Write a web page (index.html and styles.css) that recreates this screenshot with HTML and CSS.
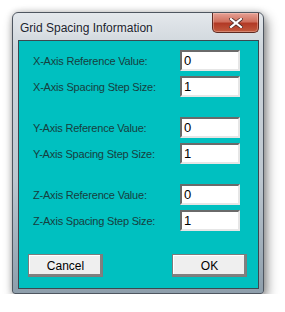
FILE: index.html
```html
<!DOCTYPE html>
<html lang="en">
<head>
    <meta charset="UTF-8">
    <title>Grid Spacing Information</title>
    <link rel="stylesheet" href="styles.css">
</head>
<body>
    <div class="window">
        <div class="titlebar">
            <span class="title">Grid Spacing Information</span>
            <button class="close" aria-label="Close">
                <svg width="14" height="10" viewBox="0 0 14 10">
                    <path d="M2 1 L12 9 M12 1 L2 9" stroke="#4a2a26" stroke-width="3.6" stroke-linecap="square"/>
                    <path d="M2 1 L12 9 M12 1 L2 9" stroke="#ffffff" stroke-width="2.2" stroke-linecap="square"/>
                </svg>
            </button>
        </div>

        <div class="client">
            <div class="group">
                <div class="row">
                    <label for="x-ref">X-Axis Reference Value:</label>
                    <input type="text" id="x-ref" value="0">
                </div>
                <div class="row">
                    <label for="x-step">X-Axis Spacing Step Size:</label>
                    <input type="text" id="x-step" value="1">
                </div>
            </div>

            <div class="group">
                <div class="row">
                    <label for="y-ref">Y-Axis Reference Value:</label>
                    <input type="text" id="y-ref" value="0">
                </div>
                <div class="row">
                    <label for="y-step">Y-Axis Spacing Step Size:</label>
                    <input type="text" id="y-step" value="1">
                </div>
            </div>

            <div class="group">
                <div class="row">
                    <label for="z-ref">Z-Axis Reference Value:</label>
                    <input type="text" id="z-ref" value="0">
                </div>
                <div class="row">
                    <label for="z-step">Z-Axis Spacing Step Size:</label>
                    <input type="text" id="z-step" value="1">
                </div>
            </div>

            <div class="buttons">
                <button class="btn">Cancel</button>
                <button class="btn">OK</button>
            </div>
        </div>
    </div>
</body>
</html>
```

FILE: styles.css
```css
body {
    margin: 0;
    background: #ffffff;
    font-family: 'Liberation Sans', Arial, sans-serif;
}

.window {
    margin: 12px 0 0 12px;
    width: 241px;
    height: 276px;
    padding: 0 4px 4px 5px;
    border: 1px solid #4e5660;
    border-radius: 6px 6px 3px 3px;
    background: linear-gradient(to bottom, #e4e8ec 0%, #cfd6dc 12%, #bcc6cf 60%, #8e9eab 100%);
    box-shadow: 3px 5px 12px rgba(0, 0, 0, 0.45), 0 0 6px rgba(0, 0, 0, 0.2);
    display: flex;
    flex-direction: column;
}

.titlebar {
    height: 27px;
    display: flex;
    justify-content: space-between;
    align-items: flex-start;
}

.title {
    font-size: 12px;
    color: #1c2430;
    padding: 8px 0 0 2px;
    text-shadow: 0 0 6px rgba(255, 255, 255, 0.9);
}

.close {
    width: 47px;
    height: 20px;
    padding: 0;
    border: 1px solid #5e2a22;
    border-top: none;
    border-radius: 0 0 5px 5px;
    background: linear-gradient(to bottom, #e6a195 0%, #d0705e 45%, #b23a26 55%, #c25a3e 100%);
    display: flex;
    align-items: center;
    justify-content: center;
    box-shadow: inset 0 0 0 1px rgba(255, 220, 210, 0.35);
}

.client {
    flex: 1;
    background: #00c0c0;
    border: 1px solid #3c4850;
    padding: 9px 11px 9px 9px;
    display: flex;
    flex-direction: column;
}

.group {
    display: flex;
    flex-direction: column;
    gap: 5px;
    padding: 0 7px 0 5px;
    margin-bottom: 20px;
}

.group:nth-child(3) {
    margin-bottom: 23px;
}

.row {
    height: 21px;
    display: flex;
    justify-content: space-between;
    align-items: center;
}

label {
    font-size: 11px;
    letter-spacing: -0.2px;
    color: #173e3e;
}

input[type="text"] {
    width: 60px;
    height: 21px;
    box-sizing: border-box;
    margin: 0;
    padding: 0 2px;
    font-family: 'Liberation Sans', Arial, sans-serif;
    font-size: 13px;
    color: #000000;
    background: #ffffff;
    border: 2px solid;
    border-color: #6a6a6a #e6e6e6 #e6e6e6 #6a6a6a;
    outline: none;
}

.buttons {
    display: flex;
    justify-content: space-between;
}

.btn {
    width: 75px;
    height: 23px;
    padding: 0;
    font-family: 'Liberation Sans', Arial, sans-serif;
    font-size: 12px;
    color: #000000;
    background: #efefef;
    border: 1px solid #7c7c7c;
    border-radius: 0;
    box-shadow: inset -2px -2px #808080, inset 1px 1px #ffffff;
}
```
